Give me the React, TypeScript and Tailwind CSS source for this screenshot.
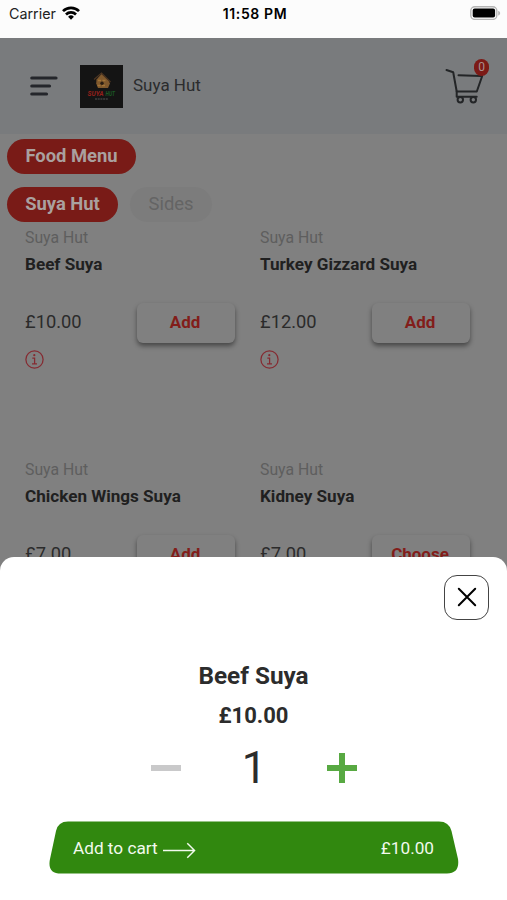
interface MenuItem {
  name: string
  price: string
  action: string
}

const menuItems: MenuItem[] = [
  { name: 'Beef Suya', price: '£10.00', action: 'Add' },
  { name: 'Turkey Gizzard Suya', price: '£12.00', action: 'Add' },
  { name: 'Chicken Wings Suya', price: '£7.00', action: 'Add' },
  { name: 'Kidney Suya', price: '£7.00', action: 'Choose' },
]

function StatusBar() {
  return (
    <div className="flex h-[38px] items-start justify-between bg-[#fcfcfc] pt-1 pl-[9px] pr-[6px] text-black">
      <div className="flex w-[120px] items-center gap-[6px] leading-5">
        <span className="font-['Inter',sans-serif] text-[14.3px] text-[#222]">Carrier</span>
        <svg className="-mt-[2px] h-[14px] w-[18px]" viewBox="0 0 18 14" fill="none" stroke="currentColor" strokeWidth="2.7">
          <path d="M1 5.1a11.4 11.4 0 0 1 16 0" />
          <path d="M4 8.5a7.1 7.1 0 0 1 10 0" />
          <path d="M9 13.7 6.1 10.8a4.1 4.1 0 0 1 5.8 0z" fill="currentColor" stroke="none" />
        </svg>
      </div>
      <span className="font-['Inter',sans-serif] text-[14px] font-semibold leading-5 tracking-[0.6px]">11:58 PM</span>
      <div className="flex w-[120px] justify-end pt-[2px]">
        <svg className="h-[14px] w-[31px]" viewBox="0 0 31 14">
          <rect x="0.8" y="0.8" width="26" height="12.6" rx="4" fill="#fcfcfc" stroke="#b5b5b5" strokeWidth="1.4" />
          <rect x="2.7" y="2.6" width="22.4" height="9" rx="2" fill="#000" />
          <path d="M28.2 4.7c2.6.8 2.6 4 0 4.8z" fill="#b5b5b5" />
        </svg>
      </div>
    </div>
  )
}

function Logo() {
  return (
    <svg className="h-[43px] w-[43px]" viewBox="0 0 43 43">
      <rect width="43" height="43" fill="#141414" />
      <path d="m16.5 14.5 5-5.500 7 6.500 1.500 3-2 4.500H18l-1.800-4.600z" fill="#80592d" />
      <path d="m14 14.500 7.500-6.500 9 9" fill="none" stroke="#4c3522" strokeWidth="1.2" />
      <path d="M18 15.500h8M17.500 20.500h9" stroke="#a17538" strokeWidth="1.6" strokeDasharray="3 1.5" />
      <circle cx="22" cy="18.3" r="1.7" fill="#2a1d12" />
      <text x="7.5" y="31.3" fill="#94201b" fontSize="8" fontWeight="700" fontStyle="italic" textLength="16" lengthAdjust="spacingAndGlyphs">SUYA</text>
      <text x="25.5" y="31.3" fill="#1a5a24" fontSize="8" fontWeight="700" fontStyle="italic" textLength="9.5" lengthAdjust="spacingAndGlyphs">HUT</text>
      <path d="M15 34h13" stroke="#555" strokeWidth="1.2" strokeDasharray="2 .7" />
    </svg>
  )
}

function Header() {
  return (
    <header className="flex h-[96px] items-center bg-[#797b7d] pl-[30px] pr-[18px]">
      <svg className="h-5 w-7" viewBox="0 0 28 20" stroke="#24262b" strokeWidth="3.2" strokeLinecap="round">
        <path d="M1.8 2H26M1.8 10h17.7M1.8 18h14.7" />
      </svg>
      <div className="ml-[22px]">
        <Logo />
      </div>
      <span className="ml-[10px] text-[17px] text-[#2b2c2d]">Suya Hut</span>
      <div className="relative -mt-[3px] ml-auto h-[38px] w-[44px]">
        <svg className="h-[38px] w-[44px]" viewBox="0 0 44 38" fill="none" stroke="#232527" strokeWidth="2" strokeLinecap="round" strokeLinejoin="round">
          <path d="m1.500 4 6.700 2.300L11.700 25.500H31.800l5.400-15.500M13.500 9.300l22.500.7" />
          <path d="M11.700 25.500v5.300h20" />
          <circle cx="15.300" cy="33.800" r="2.700" />
          <circle cx="28.300" cy="33.800" r="2.700" />
        </svg>
        <span className="absolute -top-[7px] right-0 flex h-[17px] w-[15px] items-center justify-center rounded-full bg-[#7c1a16] text-[12px] text-[#a9908f]">
          0
        </span>
      </div>
    </header>
  )
}

function InfoIcon() {
  return (
    <svg className="h-[19px] w-[19px]" viewBox="0 0 19 19" fill="none" stroke="#852a31" strokeWidth="1.25">
      <circle cx="9.5" cy="9.5" r="8.6" />
      <circle cx="9.3" cy="5.2" r="1.1" fill="#852a31" stroke="none" />
      <path d="M7.3 8.2h2.3v5.4M7 13.9h5" />
    </svg>
  )
}

function MenuCard({ item }: { item: MenuItem }) {
  return (
    <div className="h-[232px] w-[235px] pt-[5px]">
      <p className="text-[15.8px] leading-[22px] text-[#5e5e5e]">Suya Hut</p>
      <h3 className="mt-[5px] text-[17.1px] font-bold leading-5 text-[#202020]">{item.name}</h3>
      <div className="mt-[29px] flex w-[210px] items-center justify-between">
        <span className="-mt-[3px] text-[18.3px] text-[#2b2b2b]">{item.price}</span>
        <button className="h-10 w-[98px] rounded-[6px] bg-[#808080] pr-[2px] text-[17px] font-bold text-[#821d1a] shadow-[0_3px_5px_rgba(0,0,0,0.45)]">
          {item.action}
        </button>
      </div>
      <div className="mt-[7px]">
        <InfoIcon />
      </div>
    </div>
  )
}

function AddToCartSheet() {
  return (
    <section className="absolute inset-x-0 bottom-0 flex h-[343px] flex-col items-center rounded-t-[14px] bg-white text-[#2c2c2c]">
      <button className="mt-[17.5px] mr-[18px] flex h-[45px] w-[45px] items-center justify-center self-end rounded-[13px] border-[1.5px] border-[#444]">
        <svg className="h-5 w-5" viewBox="0 0 20 20" stroke="#000" strokeWidth="2" strokeLinecap="round">
          <path d="m1.8 1.8 16.4 16.4M18.2 1.8 1.8 18.2" />
        </svg>
      </button>
      <h2 className="mt-[41px] text-[24.3px] font-bold leading-[30px]">Beef Suya</h2>
      <p className="mt-[11px] text-[22px] font-bold leading-[28px]">£10.00</p>
      <div className="ml-[1px] mt-[13px] flex h-[50px] w-[206px] items-center justify-between">
        <button className="h-[6px] w-[30px] bg-[#c9c9ca]" aria-label="Remove one" />
        <span className="text-[44px] leading-none">1</span>
        <button aria-label="Add one">
          <svg className="h-[30px] w-[30px]" viewBox="0 0 30 30" fill="#58a942">
            <path d="M12 0h6v12h12v6H18v12h-6V18H0v-6h12z" />
          </svg>
        </button>
      </div>
      <button className="relative ml-[1px] mt-[28px] flex h-[53px] w-[410px] items-center justify-between pt-[3px] pr-[25px] pl-[24px] text-[17.2px] text-[#f2faee]">
        <svg className="absolute inset-0 h-full w-full" viewBox="0 0 410 53" fill="#31880f">
          <path d="M19 .5H390Q400 .5 402.5 10L409 38Q411 52.5 398 52.5H12Q-1.5 52.5 .8 39L7 10Q9 .5 19 .5Z" />
        </svg>
        <span className="relative flex items-center gap-[5px]">
          Add to cart
          <svg className="mt-[5px] h-[17px] w-[33px]" viewBox="0 0 34 17" fill="none" stroke="currentColor" strokeWidth="1.5">
            <path d="M0 8.5h32.5M25 1l7.5 7.5L25 16" />
          </svg>
        </span>
        <span className="relative">£10.00</span>
      </button>
    </section>
  )
}

export default function App() {
  return (
    <div className="relative h-[900px] w-[507px] overflow-hidden bg-[#808080] font-['Roboto',sans-serif]">
      <StatusBar />
      <Header />
      <main>
        <div className="flex px-[7px] pt-[5px]">
          <button className="h-[35px] w-[129px] rounded-full bg-[#791b17] pb-[2px] text-[18.4px] font-bold text-[#aaa09f]">
            Food Menu
          </button>
        </div>
        <div className="mt-[13px] flex gap-[12px] px-[7px]">
          <button className="h-[35px] w-[111px] rounded-full bg-[#791b17] pb-[2px] text-[18.4px] font-bold text-[#aaa09f]">
            Suya Hut
          </button>
          <button className="h-[35px] w-[82px] rounded-full bg-[#7c7c7c] pb-[2px] text-[18.4px] text-[#646464]">
            Sides
          </button>
        </div>
        <div className="flex w-[495px] flex-wrap pl-[25px]">
          {menuItems.map((item) => (
            <MenuCard key={item.name} item={item} />
          ))}
        </div>
      </main>
      <AddToCartSheet />
    </div>
  )
}
